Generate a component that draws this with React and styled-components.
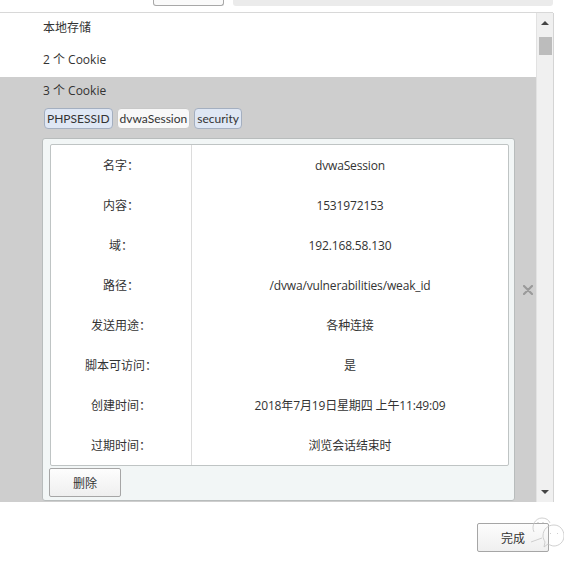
import React from 'react';
import styled, {createGlobalStyle} from 'styled-components';

const GlobalStyle = createGlobalStyle`
  html, body {
    margin: 0;
    padding: 0;
    background: #fff;
  }
  body {
    width: 564px;
    height: 564px;
    overflow: hidden;
    font-family: 'Open Sans', 'Noto Sans CJK SC', sans-serif;
    font-size: 12px;
    color: #333;
  }
`;

const Page = styled.div`
  position: relative;
  width: 564px;
  height: 564px;
`;

const TopBar = styled.div`
  display: flex;
  align-items: flex-start;
  width: 553px;
  height: 12px;
  border-bottom: 1px solid #d8d8d8;
`;

const StubButton = styled.div`
  width: 70px;
  height: 5px;
  margin-left: 153px;
  border: 1px solid #a8a8a8;
  border-top: none;
  border-radius: 0 0 3px 3px;
  background: #fafafa;
`;

const StubInput = styled.div`
  width: 322px;
  height: 6px;
  margin-left: 9px;
  border-radius: 0 0 3px 3px;
  background: #ebebeb;
`;

const Main = styled.div`
  display: flex;
  width: 553px;
  height: 489px;
  border-right: 1px solid #d4d4d4;
`;

const List = styled.div`
  flex: 1;
  display: flex;
  flex-direction: column;
`;

const Row = styled.div`
  height: 32px;
  padding: 7px 0 0 43px;
  box-sizing: border-box;
  line-height: 16px;
`;

const Selected = styled.div`
  flex: 1;
  display: flex;
  background: #cecece;
`;

const SelectedBody = styled.div`
  width: 473px;
  padding: 6px 0 0 42px;
`;

const Title = styled.div`
  padding-left: 1px;
  line-height: 16px;
`;

const Tags = styled.div`
  display: flex;
  gap: 4px;
  margin: 9px 0 9px 2px;
`;

const Tag = styled.div`
  height: 21px;
  box-sizing: border-box;
  padding: 0 2px;
  line-height: 19px;
  border: 1px solid ${({active}) => (active ? '#c8c8c8' : '#a4afc0')};
  border-radius: 4px;
  background: ${({active}) => (active ? '#f8f8f8' : '#dfe7f4')};
  font-family: Lato, 'Open Sans', sans-serif;
  font-size: 12px;
`;

const Card = styled.div`
  height: 363px;
  box-sizing: border-box;
  padding: 5px 5px 5px 7px;
  border: 1px solid #b8bcbc;
  border-radius: 3px;
  background: #f2f6f6;
`;

const Table = styled.div`
  display: grid;
  grid-template-columns: 141px 1fr;
  border: 1px solid #bfc4c4;
  border-radius: 2px;
  background: #fff;
`;

const Label = styled.div`
  height: 40px;
  line-height: 42px;
  text-align: center;
  border-right: 1px solid #dcdcdc;
`;

const Value = styled.div`
  height: 40px;
  line-height: 42px;
  text-align: center;
  letter-spacing: -0.15px;
`;

const Button = styled.button`
  display: block;
  width: 72px;
  height: 29px;
  padding: 0;
  border: 1px solid #a6a6a6;
  border-radius: 2px;
  background: linear-gradient(#fdfdfd, #efefef);
  font: inherit;
  color: #333;
  margin: ${({m}) => m || 0};
`;

const CloseCell = styled.div`
  flex: 1;
  display: flex;
  align-items: center;
  justify-content: center;
  padding-left: 4px;
`;

const Scrollbar = styled.div`
  display: flex;
  flex-direction: column;
  align-items: center;
  width: 17px;
  background: #f0f0f0;
  border-left: 1px solid #e2e2e2;
  box-sizing: border-box;
`;

const Arrow = styled.div`
  width: 0;
  height: 0;
  border-left: 4px solid transparent;
  border-right: 4px solid transparent;
  ${({down}) => (down ? 'border-top: 4px solid #444;' : 'border-bottom: 4px solid #444;')}
  margin: ${({down}) => (down ? 'auto 0 8px' : '8px 0 0')};
`;

const Thumb = styled.div`
  width: 13px;
  height: 18px;
  margin-top: 12px;
  background: #bcbcbc;
`;

const Footer = styled.div`
  display: flex;
  justify-content: flex-end;
  padding: 21px 15px 0 0;
`;

const Stamp = styled.svg`
  position: absolute;
  right: 0;
  top: 514px;
`;

const fields = [
  ['名字：', 'dvwaSession'],
  ['内容：', '1531972153'],
  ['域：', '192.168.58.130'],
  ['路径：', '/dvwa/vulnerabilities/weak_id'],
  ['发送用途：', '各种连接'],
  ['脚本可访问：', '是'],
  ['创建时间：', '2018年7月19日星期四 上午11:49:09'],
  ['过期时间：', '浏览会话结束时'],
];

const CloseIcon = () => (
  <svg width="10" height="10" viewBox="0 0 10 10">
    <path d="M1 1 L9 9 M9 1 L1 9" stroke="#9a9a9a" strokeWidth="2.2" strokeLinecap="round" />
  </svg>
);

const App = () => (
  <Page>
    <GlobalStyle />
    <TopBar>
      <StubButton />
      <StubInput />
    </TopBar>
    <Main>
      <List>
        <Row>本地存储</Row>
        <Row>2 个 Cookie</Row>
        <Selected>
          <SelectedBody>
            <Title>3 个 Cookie</Title>
            <Tags>
              <Tag>PHPSESSID</Tag>
              <Tag active>dvwaSession</Tag>
              <Tag>security</Tag>
            </Tags>
            <Card>
              <Table>
                {fields.map(([k, v]) => (
                  <React.Fragment key={k}>
                    <Label>{k}</Label>
                    <Value>{v}</Value>
                  </React.Fragment>
                ))}
              </Table>
              <Button m="2px 0 0 -1px">删除</Button>
            </Card>
          </SelectedBody>
          <CloseCell>
            <CloseIcon />
          </CloseCell>
        </Selected>
      </List>
      <Scrollbar>
        <Arrow />
        <Thumb />
        <Arrow down />
      </Scrollbar>
    </Main>
    <Footer>
      <Button>完成</Button>
    </Footer>
    <Stamp width="36" height="34" viewBox="0 0 36 34">
      <g fill="none" stroke="#c4c4c4" strokeWidth="0.8">
        <path d="M6 18 C3 12 7 4 14 4 C18 4 21 6 22 9" />
        <circle cx="10" cy="9" r="0.7" fill="#aaa" stroke="none" />
        <circle cx="15" cy="9" r="0.7" fill="#aaa" stroke="none" />
        <path d="M15 22 C15 15 20 11 26 11 C32 11 36 16 36 22 C36 28 31 32 26 32 C24 32 22 31 20 30 L16 33 L17 28 C16 26 15 24 15 22 Z" />
        <path d="M22 20 l1 -1 M29 20 l1 -1" />
        <path d="M3 28 L14 24" />
      </g>
    </Stamp>
  </Page>
);

export default App;
